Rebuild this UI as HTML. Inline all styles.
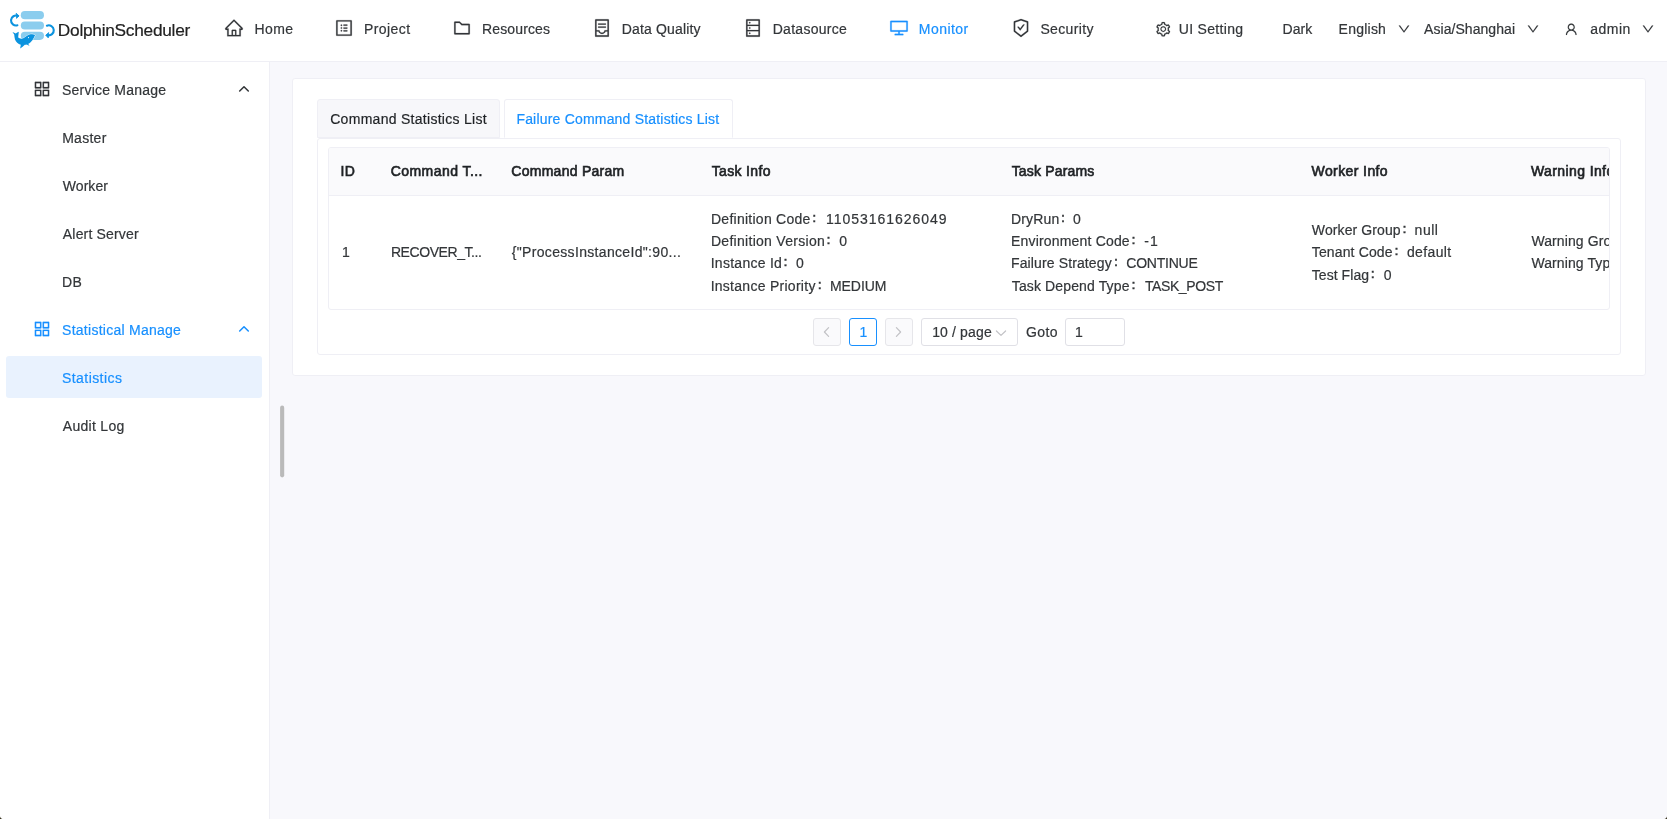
<!DOCTYPE html>
<html lang="en">
<head>
<meta charset="utf-8">
<title>DolphinScheduler</title>
<style>
*{box-sizing:border-box;margin:0;padding:0}
html,body{width:1667px;height:819px;overflow:hidden}
body{font-family:"Liberation Sans","Noto Sans CJK SC",sans-serif;font-size:14px;color:#333639;background:#f8f8fc;position:relative;line-height:22px}
#app{position:absolute;left:0;top:0;width:1667px;height:819px;overflow:hidden;will-change:transform}
.t{position:absolute;white-space:nowrap;line-height:22px;-webkit-text-stroke:0.2px}
.ic{position:absolute;display:block}
.box{position:absolute}
#header{left:0;top:0;width:1667px;height:62px;background:#fff;border-bottom:1px solid #efeff5}
#side{left:0;top:62px;width:270px;height:757px;background:#fff;border-right:1px solid #efeff5}
#sel{left:6px;top:356px;width:256px;height:42px;background:#e9f2fe;border-radius:3px}
#card{left:292px;top:78px;width:1354px;height:298px;background:#fff;border:1px solid #efeff5;border-radius:3px}
.tab{top:99px;height:39px;border:1px solid #efeff5;border-radius:3px 3px 0 0}
#tab1{left:317px;width:183px;background:#f7f7fa}
#tab2{left:504px;width:229px;background:#fff;border-bottom-color:#fff}
#pane{left:317px;top:137.5px;width:1304px;height:217px;border:1px solid #efeff5;border-radius:3px;background:#fff}
#tbl{left:328px;top:147px;width:1282px;height:163px;border:1px solid #efeff5;border-radius:3px;background:#fff;overflow:hidden}
#thead{left:0;top:0;width:1300px;height:48px;background:#fafafc;border-bottom:1px solid #efeff5}
#clip{left:0;top:0;width:1609px;height:400px;overflow:hidden}
.pg{top:318px;height:28px;border:1px solid #e0e0e6;border-radius:3px;background:#fff}
.pg.dis{background:#fafafc;border-color:#e6e6ea}
.co{position:absolute;line-height:22px;white-space:nowrap;font-family:"WenQuanYi Zen Hei","Noto Sans CJK SC",sans-serif;-webkit-text-stroke:0.35px}
ul{list-style:none}
</style>
</head>
<body>
<div id="app">
<header>
<div class="box" id="header"></div>
<div class="logo-wrap">
<svg class="ic" id="logo" style="left:0;top:0" width="60" height="56" viewBox="0 0 60 56">
<rect x="20.8" y="11.1" width="23.2" height="8.1" rx="4.05" fill="#8bcdee"/>
<rect x="20.8" y="21.4" width="23.2" height="8" rx="4" fill="#8bcdee"/>
<rect x="20.8" y="31.7" width="23.2" height="8.2" rx="4.1" fill="#8bcdee"/>
<path d="M18 15.9 A5 5 0 1 0 17.4 25.3" fill="none" stroke="#0b93df" stroke-width="2.1" stroke-linecap="round"/>
<path d="M16.2 13.2 L18.9 15.8 L16.6 18.4 Z" fill="#0b93df" stroke="#0b93df" stroke-width="0.8" stroke-linejoin="round"/>
<path d="M46.9 25.7 A5 5 0 1 1 47.6 35.2" fill="none" stroke="#0b93df" stroke-width="2.1" stroke-linecap="round"/>
<path d="M48.7 32.6 L45.7 35.2 L48.3 37.9 Z" fill="#0b93df" stroke="#0b93df" stroke-width="0.8" stroke-linejoin="round"/>
<path d="M12.5 31.9 C13.6 32.4 14.8 33 15.7 33.5 C16.6 32.9 17.7 32.3 18.8 31.8 C18.7 33.6 18.3 35.6 18.2 37.2 C19.6 38.9 21.6 38.9 23.4 38.2 C25.4 37.3 27.2 35.4 29.6 34.5 C31.5 33.9 33.6 34.2 35.2 35 C34.6 35.9 34.2 36.8 33.8 37.7 C33 39.4 31.9 41 30.6 42.2 C29.8 42.9 29 43.5 28.1 44 C28.7 44.4 29.2 45 29.5 45.7 C28.5 45.5 27.6 45.1 26.8 44.6 C26 44.9 25.4 44.8 24.8 44.7 C23.4 46 22 47.4 20.2 48.4 C20.4 47.2 20.6 45.9 20.8 44.7 C19.4 44.3 18.2 43.6 17.2 42.7 C16.2 41.8 15.5 40.7 15 39.5 C14.5 37.9 14.4 36.2 14.2 34.5 C13.6 33.6 13 32.8 12.5 31.9 Z" fill="#0b93df" stroke="#fff" stroke-width="0.9" paint-order="stroke" stroke-linejoin="round"/>
<circle cx="28.5" cy="37.6" r="0.55" fill="#fff"/>
</svg>
<span class="t" id="brand" style="left:57.83px;top:19.20px;letter-spacing:-0.266px;font-size:17.3px;color:#222">DolphinScheduler</span>
</div>
<nav class="main-menu">
<div class="menu-item"><svg class="ic" style="left:224.4px;top:18.4px" width="20" height="20" viewBox="0 0 1024 1024" fill="#333639" stroke="#333639" stroke-width="9"><path d="M946.5 505L560.1 118.8l-25.900-25.900a31.500 31.500 0 0 0-44.400 0L77.500 505a63.900 63.900 0 0 0-18.800 46c.400 35.200 29.700 63.300 64.900 63.300h42.500V940h691.800V614.300h43.400c17.100 0 33.200-6.700 45.300-18.800a63.600 63.600 0 0 0 18.700-45.300c0-17-6.700-33.100-18.800-45.200zM568 868H456V664h112v204zm217.900-325.700V868H632V640c0-22.100-17.900-40-40-40H432c-22.100 0-40 17.900-40 40v228H238.100V542.300h-96l370-369.700 23.100 23.100L882 542.300h-96.100z"/></svg><span class="t" id="n1" style="left:254.47px;top:18.00px;letter-spacing:0.417px">Home</span></div>
<div class="menu-item"><svg class="ic" style="left:333.8px;top:18.3px" width="20" height="20" viewBox="0 0 1024 1024" fill="#333639" stroke="#333639" stroke-width="9"><path d="M880 112H144c-17.700 0-32 14.300-32 32v736c0 17.700 14.300 32 32 32h736c17.700 0 32-14.300 32-32V144c0-17.700-14.300-32-32-32zm-40 728H184V184h656v656zM492 400h184c4.400 0 8-3.600 8-8v-48c0-4.400-3.600-8-8-8H492c-4.400 0-8 3.600-8 8v48c0 4.400 3.600 8 8 8zm0 144h184c4.400 0 8-3.600 8-8v-48c0-4.400-3.600-8-8-8H492c-4.400 0-8 3.600-8 8v48c0 4.400 3.600 8 8 8zm0 144h184c4.400 0 8-3.600 8-8v-48c0-4.400-3.600-8-8-8H492c-4.400 0-8 3.600-8 8v48c0 4.400 3.600 8 8 8zM340 368a40 40 0 1 0 80 0 40 40 0 1 0-80 0zm0 144a40 40 0 1 0 80 0 40 40 0 1 0-80 0zm0 144a40 40 0 1 0 80 0 40 40 0 1 0-80 0z"/></svg><span class="t" id="n2" style="left:364.04px;top:18.00px;letter-spacing:0.418px">Project</span></div>
<div class="menu-item"><svg class="ic" style="left:451.8px;top:17.8px" width="20" height="20" viewBox="0 0 1024 1024" fill="#333639" stroke="#333639" stroke-width="9"><path d="M880 298.400H521L403.700 186.200a8.150 8.150 0 0 0-5.500-2.200H144c-17.700 0-32 14.300-32 32v592c0 17.700 14.300 32 32 32h736c17.700 0 32-14.300 32-32V330.400c0-17.700-14.300-32-32-32zM840 768H184V256h188.500l119.600 114.400H840V768z"/></svg><span class="t" id="n3" style="left:482.04px;top:18.00px;letter-spacing:0.128px">Resources</span></div>
<div class="menu-item"><svg class="ic" style="left:591.5px;top:18.3px" width="20" height="20" viewBox="0 0 1024 1024" fill="#333639" stroke="#333639" stroke-width="9"><path d="M832 64H192c-17.700 0-32 14.300-32 32v832c0 17.700 14.300 32 32 32h640c17.700 0 32-14.300 32-32V96c0-17.700-14.300-32-32-32zm-40 824H232V687h97.900c11.600 32.800 32 62.300 59.100 84.700 34.500 28.500 78.200 44.300 123 44.300s88.500-15.700 123-44.300c27.100-22.400 47.500-51.900 59.100-84.700H792v201zm0-264H643.600l-5.200 24.700C626.400 708.500 573.200 752 512 752s-114.400-43.500-126.500-103.300l-5.200-24.700H232V136h560v488zM320 341h384c4.400 0 8-3.600 8-8v-48c0-4.400-3.600-8-8-8H320c-4.400 0-8 3.600-8 8v48c0 4.400 3.600 8 8 8zm0 160h384c4.400 0 8-3.600 8-8v-48c0-4.400-3.600-8-8-8H320c-4.400 0-8 3.600-8 8v48c0 4.400 3.600 8 8 8z"/></svg><span class="t" id="n4" style="left:621.68px;top:18.00px;letter-spacing:0.170px">Data Quality</span></div>
<div class="menu-item"><svg class="ic" style="left:742.9px;top:18.3px" width="20" height="20" viewBox="0 0 1024 1024" fill="#333639" stroke="#333639" stroke-width="9"><path d="M832 64H192c-17.700 0-32 14.300-32 32v832c0 17.700 14.300 32 32 32h640c17.700 0 32-14.300 32-32V96c0-17.700-14.300-32-32-32zm-600 72h560v208H232V136zm560 480H232V408h560v208zm0 272H232V680h560v208zM304 240a40 40 0 1 0 80 0 40 40 0 1 0-80 0zm0 272a40 40 0 1 0 80 0 40 40 0 1 0-80 0zm0 272a40 40 0 1 0 80 0 40 40 0 1 0-80 0z"/></svg><span class="t" id="n5" style="left:772.68px;top:18.00px;letter-spacing:0.290px">Datasource</span></div>
<div class="menu-item active"><svg class="ic" style="left:888.6px;top:18.4px" width="20" height="20" viewBox="0 0 1024 1024" fill="#1890ff" stroke="#1890ff" stroke-width="9"><path d="M928 140H96c-17.700 0-32 14.300-32 32v496c0 17.700 14.300 32 32 32h380v112H304c-8.800 0-16 7.200-16 16v48c0 4.400 3.600 8 8 8h432c4.400 0 8-3.600 8-8v-48c0-8.800-7.200-16-16-16H548V700h380c17.700 0 32-14.300 32-32V172c0-17.700-14.300-32-32-32zm-40 488H136V212h752v416z"/></svg><span class="t" id="n6" style="left:918.83px;top:18.00px;letter-spacing:0.441px;color:#1890ff">Monitor</span></div>
<div class="menu-item"><svg class="ic" style="left:1010.8px;top:18px" width="20" height="20" viewBox="0 0 1024 1024" fill="#333639" stroke="#333639" stroke-width="9"><path d="M866.900 169.900L527.100 54.100C523 52.700 517.500 52 512 52s-11 .7-15.100 2.100L157.100 169.900c-8.300 2.800-15.100 12.400-15.100 21.200v482.400c0 8.800 5.700 20.400 12.600 25.900L499.300 968c3.500 2.700 8 4.100 12.600 4.100s9.200-1.400 12.600-4.100l344.700-268.600c6.900-5.400 12.600-17 12.600-25.900V191.100c.2-8.800-6.600-18.300-14.900-21.200zM810 654.300L512 886.500 214 654.300V226.700l298-101.600 298 101.600v427.600zm-405.800-201c-3-4.100-7.800-6.600-13-6.600H336c-6.500 0-10.300 7.400-6.500 12.700l126.400 174a16.100 16.100 0 0 0 26 0l212.600-292.700c3.800-5.300 0-12.700-6.500-12.700h-55.200c-5.100 0-10 2.500-13 6.600L468.900 542.400l-64.700-89.100z"/></svg><span class="t" id="n7" style="left:1040.41px;top:18.00px;letter-spacing:0.353px">Security</span></div>
</nav>
<div class="toolbar">
<div class="tool"><svg class="ic" style="left:1155.35px;top:21.15px" width="16.5" height="16.5" viewBox="0 0 1024 1024" fill="#333639" stroke="#333639" stroke-width="9"><path d="M924.800 625.700l-65.500-56c3.100-19 4.700-38.400 4.700-57.800s-1.600-38.800-4.700-57.800l65.500-56a32.030 32.030 0 0 0 9.300-35.200l-.9-2.600a442.090 442.090 0 0 0-79.700-137.900l-1.800-2.100a32.120 32.120 0 0 0-35.100-9.500l-81.300 28.900c-30-24.600-63.500-44-99.700-57.600l-15.700-85a32.050 32.050 0 0 0-25.800-25.700l-2.700-.5c-52.100-9.400-106.900-9.400-159 0l-2.700.5a32.050 32.050 0 0 0-25.800 25.700l-15.800 85.400a351.860 351.860 0 0 0-99 57.400l-81.900-29.100a32 32 0 0 0-35.100 9.500l-1.800 2.100a446.020 446.020 0 0 0-79.700 137.900l-.9 2.600c-4.500 12.500-.8 26.500 9.300 35.200l66.300 56.600c-3.100 18.800-4.600 38-4.600 57.100 0 19.200 1.500 38.400 4.600 57.100L99 625.500a32.030 32.030 0 0 0-9.300 35.200l.9 2.600c18.100 50.400 44.900 96.900 79.700 137.900l1.800 2.100a32.120 32.120 0 0 0 35.100 9.500l81.900-29.100c29.800 24.500 63.100 43.900 99 57.400l15.800 85.400a32.050 32.050 0 0 0 25.800 25.700l2.700.5a449.400 449.400 0 0 0 159 0l2.700-.5a32.050 32.050 0 0 0 25.800-25.700l15.700-85a350 350 0 0 0 99.700-57.600l81.300 28.900a32 32 0 0 0 35.100-9.500l1.800-2.100c34.800-41.100 61.600-87.500 79.700-137.900l.9-2.600c4.500-12.300.8-26.300-9.300-35zM788.300 465.900c2.500 15.100 3.800 30.600 3.800 46.100s-1.300 31-3.800 46.100l-6.600 40.100 74.700 63.900a370.030 370.030 0 0 1-42.600 73.600L721 702.800l-31.400 25.800c-23.900 19.600-50.500 35-79.300 45.800l-38.100 14.300-17.900 97a377.500 377.500 0 0 1-85 0l-17.900-97.200-37.800-14.500c-28.500-10.800-55-26.200-78.700-45.700l-31.400-25.900-93.400 33.200c-17-22.900-31.200-47.600-42.600-73.600l75.500-64.500-6.500-40c-2.400-14.900-3.700-30.300-3.700-45.500 0-15.300 1.200-30.600 3.700-45.500l6.500-40-75.500-64.500c11.300-26.100 25.600-50.700 42.600-73.600l93.400 33.200 31.400-25.900c23.700-19.500 50.200-34.900 78.700-45.700l37.900-14.300 17.900-97.200c28.100-3.200 56.800-3.200 85 0l17.900 97 38.100 14.300c28.700 10.800 55.400 26.200 79.300 45.800l31.400 25.800 92.800-32.900c17 22.900 31.200 47.600 42.600 73.600L781.800 426l6.500 39.900zM512 326c-97.200 0-176 78.800-176 176s78.800 176 176 176 176-78.800 176-176-78.800-176-176-176zm79.200 255.200A111.600 111.600 0 0 1 512 614c-29.900 0-58-11.700-79.200-32.800A111.600 111.600 0 0 1 400 502c0-29.900 11.700-58 32.800-79.200C454 401.600 482.100 390 512 390c29.900 0 58 11.600 79.200 32.800A111.600 111.600 0 0 1 624 502c0 29.900-11.700 58-32.800 79.200z"/></svg><span class="t" id="n8" style="left:1178.81px;top:18.00px;letter-spacing:0.310px">UI Setting</span></div>
<div class="tool"><span class="t" id="n9" style="left:1282.47px;top:18.00px;letter-spacing:0.050px">Dark</span></div>
<div class="tool"><span class="t" id="n10" style="left:1338.59px;top:18.00px;letter-spacing:0.235px">English</span><svg class="ic" style="left:1396.9px;top:22.3px" width="14" height="14" viewBox="0 0 1024 1024" fill="#333639" stroke="#333639" stroke-width="9"><path d="M884 256h-75c-5.100 0-9.900 2.500-12.900 6.600L512 654.200 227.900 262.600c-3-4.100-7.800-6.600-12.900-6.600h-75c-6.500 0-10.300 7.400-6.500 12.700l352.600 486.100c12.800 17.600 39 17.600 51.700 0l352.600-486.100c3.900-5.300.1-12.700-6.400-12.700z"/></svg></div>
<div class="tool"><span class="t" id="n11" style="left:1424.00px;top:18.00px;letter-spacing:0.061px">Asia/Shanghai</span><svg class="ic" style="left:1525.8px;top:22.3px" width="14" height="14" viewBox="0 0 1024 1024" fill="#333639" stroke="#333639" stroke-width="9"><path d="M884 256h-75c-5.100 0-9.900 2.500-12.900 6.600L512 654.200 227.900 262.600c-3-4.100-7.800-6.600-12.900-6.600h-75c-6.500 0-10.300 7.400-6.500 12.700l352.600 486.100c12.800 17.600 39 17.600 51.700 0l352.600-486.100c3.900-5.300.1-12.700-6.400-12.700z"/></svg></div>
<div class="tool"><svg class="ic" style="left:1563.9px;top:21.9px" width="14.5" height="14.5" viewBox="0 0 1024 1024" fill="#333639" stroke="#333639" stroke-width="9"><path d="M858.500 763.600a374 374 0 0 0-80.600-119.500 375.630 375.630 0 0 0-119.500-80.600c-.4-.2-.8-.3-1.200-.5C719.500 518 760 444.700 760 362c0-137-111-248-248-248S264 225 264 362c0 82.700 40.500 156 102.800 201.100-.4.200-.8.300-1.200.5-44.800 18.900-85 46-119.500 80.600a375.630 375.630 0 0 0-80.600 119.500A371.700 371.700 0 0 0 136 901.800a8 8 0 0 0 8 8.200h60c4.400 0 7.900-3.500 8-7.800 2-77.200 33-149.500 87.800-204.300 56.700-56.700 132-87.900 212.200-87.900s155.500 31.200 212.200 87.900C779 752.700 810 825 812 902.200c.1 4.400 3.600 7.800 8 7.800h60a8 8 0 0 0 8-8.200c-1-47.800-10.900-94.300-29.500-138.200zM512 534c-45.900 0-89.100-17.900-121.600-50.400S340 407.900 340 362c0-45.900 17.900-89.100 50.400-121.600S466.100 190 512 190s89.100 17.900 121.600 50.400S684 316.100 684 362c0 45.900-17.900 89.100-50.400 121.600S557.900 534 512 534z"/></svg><span class="t" id="n12" style="left:1590.22px;top:18.00px;letter-spacing:0.487px">admin</span><svg class="ic" style="left:1641.3px;top:22.3px" width="14" height="14" viewBox="0 0 1024 1024" fill="#333639" stroke="#333639" stroke-width="9"><path d="M884 256h-75c-5.100 0-9.900 2.500-12.900 6.600L512 654.200 227.900 262.600c-3-4.100-7.800-6.600-12.900-6.600h-75c-6.500 0-10.300 7.400-6.500 12.700l352.600 486.100c12.800 17.600 39 17.600 51.700 0l352.600-486.100c3.900-5.300.1-12.700-6.400-12.700z"/></svg></div>
</div>
</header>
<aside>
<div class="box" id="side"></div>
<div class="box" id="sel"></div>
<ul class="side-menu">
<li class="submenu"><svg class="ic" style="left:32.3px;top:78.8px" width="20" height="20" viewBox="0 0 1024 1024" fill="#333639" stroke="#333639" stroke-width="9"><path d="M464 144H160c-8.800 0-16 7.200-16 16v304c0 8.800 7.200 16 16 16h304c8.800 0 16-7.200 16-16V160c0-8.800-7.200-16-16-16zm-52 268H212V212h200v200zm452-268H560c-8.800 0-16 7.200-16 16v304c0 8.800 7.200 16 16 16h304c8.800 0 16-7.200 16-16V160c0-8.800-7.200-16-16-16zm-52 268H612V212h200v200zM464 544H160c-8.800 0-16 7.200-16 16v304c0 8.800 7.200 16 16 16h304c8.800 0 16-7.200 16-16V560c0-8.800-7.200-16-16-16zm-52 268H212V612h200v200zm452-268H560c-8.800 0-16 7.200-16 16v304c0 8.800 7.200 16 16 16h304c8.800 0 16-7.200 16-16V560c0-8.800-7.200-16-16-16zm-52 268H612V612h200v200z"/></svg><span class="t" id="s1" style="left:62.07px;top:79.00px;letter-spacing:0.212px">Service Manage</span><svg class="ic" style="left:236.3px;top:80.8px" width="16" height="16" viewBox="0 0 16 16" fill="none" stroke="#333639" stroke-width="1.55" stroke-linecap="round" stroke-linejoin="round"><path d="M3.7 10 L8 5.8 L12.3 10"/></svg>
<ul>
<li><span class="t" id="s2" style="left:62.14px;top:127.00px;letter-spacing:0.283px">Master</span></li>
<li><span class="t" id="s3" style="left:62.84px;top:175.00px;letter-spacing:0.039px">Worker</span></li>
<li><span class="t" id="s4" style="left:62.86px;top:223.00px;letter-spacing:0.168px">Alert Server</span></li>
<li><span class="t" id="s5" style="left:61.91px;top:271.00px;letter-spacing:0.491px">DB</span></li>
</ul>
</li>
<li class="submenu active"><svg class="ic" style="left:32.3px;top:318.8px" width="20" height="20" viewBox="0 0 1024 1024" fill="#1890ff" stroke="#1890ff" stroke-width="9"><path d="M464 144H160c-8.800 0-16 7.200-16 16v304c0 8.800 7.200 16 16 16h304c8.800 0 16-7.200 16-16V160c0-8.800-7.200-16-16-16zm-52 268H212V212h200v200zm452-268H560c-8.800 0-16 7.200-16 16v304c0 8.800 7.200 16 16 16h304c8.800 0 16-7.200 16-16V160c0-8.800-7.200-16-16-16zm-52 268H612V212h200v200zM464 544H160c-8.800 0-16 7.200-16 16v304c0 8.800 7.200 16 16 16h304c8.800 0 16-7.200 16-16V560c0-8.800-7.200-16-16-16zm-52 268H212V612h200v200zm452-268H560c-8.800 0-16 7.200-16 16v304c0 8.800 7.200 16 16 16h304c8.800 0 16-7.200 16-16V560c0-8.800-7.200-16-16-16zm-52 268H612V612h200v200z"/></svg><span class="t" id="s6" style="left:62.08px;top:319.00px;letter-spacing:0.260px;color:#1890ff">Statistical Manage</span><svg class="ic" style="left:236.3px;top:320.8px" width="16" height="16" viewBox="0 0 16 16" fill="none" stroke="#1890ff" stroke-width="1.55" stroke-linecap="round" stroke-linejoin="round"><path d="M3.7 10 L8 5.8 L12.3 10"/></svg>
<ul>
<li class="active"><span class="t" id="s7" style="left:62.05px;top:367.00px;letter-spacing:0.424px;color:#1890ff">Statistics</span></li>
<li><span class="t" id="s8" style="left:62.86px;top:415.00px;letter-spacing:0.276px">Audit Log</span></li>
</ul>
</li>
</ul>
<svg class="ic" style="left:276px;top:400px" width="12" height="84" viewBox="0 0 12 84"><rect x="4.1" y="5.6" width="4.1" height="71.8" rx="2.05" fill="#bababa"/></svg>
</aside>
<main>
<div class="box" id="card"></div>
<div class="box" id="pane"></div>
<div class="tabs">
<div class="box tab" id="tab1"></div>
<div class="box tab" id="tab2"></div>
<span class="t" id="t1" style="left:330.23px;top:108.00px;letter-spacing:0.283px;color:#1f2225">Command Statistics List</span>
<span class="t" id="t2" style="left:516.40px;top:108.00px;letter-spacing:0.195px;color:#1890ff">Failure Command Statistics List</span>
</div>
<div class="box" id="tbl"><div class="box" id="thead"></div></div>
<div class="box" id="clip">
<div class="tr head">
<span class="t" id="h1" style="left:340.52px;top:160.00px;letter-spacing:0.231px;-webkit-text-stroke:0.65px;color:#1f2225">ID</span>
<span class="t" id="h2" style="left:390.71px;top:160.00px;letter-spacing:0.447px;-webkit-text-stroke:0.65px;color:#1f2225">Command T...</span>
<span class="t" id="h3" style="left:511.29px;top:160.00px;letter-spacing:0.268px;-webkit-text-stroke:0.65px;color:#1f2225">Command Param</span>
<span class="t" id="h4" style="left:711.69px;top:160.00px;letter-spacing:0.341px;-webkit-text-stroke:0.65px;color:#1f2225">Task Info</span>
<span class="t" id="h5" style="left:1011.69px;top:160.00px;letter-spacing:0.172px;-webkit-text-stroke:0.65px;color:#1f2225">Task Params</span>
<span class="t" id="h6" style="left:1311.52px;top:160.00px;letter-spacing:0.403px;-webkit-text-stroke:0.65px;color:#1f2225">Worker Info</span>
<span class="t" id="h7" style="left:1530.91px;top:160.00px;letter-spacing:0.403px;-webkit-text-stroke:0.65px;color:#1f2225">Warning Info</span>
</div>
<div class="tr">
<div class="td"><span class="t" id="r1" style="left:342.06px;top:241.00px">1</span></div>
<div class="td"><span class="t" id="r2" style="left:390.91px;top:241.00px;letter-spacing:-0.429px">RECOVER_T...</span></div>
<div class="td"><span class="t" id="r3" style="left:511.75px;top:241.00px;letter-spacing:0.328px">{&quot;ProcessInstanceId&quot;:90...</span></div>
<div class="td">
<div><span class="t" id="a1" style="left:710.96px;top:208.00px;letter-spacing:0.265px">Definition Code</span><span class="co" style="left:807.30px;top:207.00px">：</span><span class="t" id="a1v" style="left:826.05px;top:208.00px;letter-spacing:0.954px">11053161626049</span></div>
<div><span class="t" id="a2" style="left:710.96px;top:230.00px;letter-spacing:0.285px">Definition Version</span><span class="co" style="left:821.50px;top:229.00px">：</span><span class="t" id="a2v" style="left:839.37px;top:230.00px">0</span></div>
<div><span class="t" id="a3" style="left:710.73px;top:252.00px;letter-spacing:0.263px">Instance Id</span><span class="co" style="left:778.50px;top:251.00px">：</span><span class="t" id="a3v" style="left:795.94px;top:252.00px">0</span></div>
<div><span class="t" id="a4" style="left:710.63px;top:275.00px;letter-spacing:0.274px">Instance Priority</span><span class="co" style="left:812.80px;top:274.00px">：</span><span class="t" id="a4v" style="left:829.96px;top:275.00px;letter-spacing:-0.058px">MEDIUM</span></div>
</div>
<div class="td">
<div><span class="t" id="b1" style="left:1010.90px;top:208.00px;letter-spacing:0.201px">DryRun</span><span class="co" style="left:1056.10px;top:207.00px">：</span><span class="t" id="b1v" style="left:1072.97px;top:208.00px">0</span></div>
<div><span class="t" id="b2" style="left:1011.00px;top:230.00px;letter-spacing:0.179px">Environment Code</span><span class="co" style="left:1126.50px;top:229.00px">：</span><span class="t" id="b2v" style="left:1144.21px;top:230.00px;letter-spacing:1.138px">-1</span></div>
<div><span class="t" id="b3" style="left:1011.00px;top:252.00px;letter-spacing:0.125px">Failure Strategy</span><span class="co" style="left:1109.10px;top:251.00px">：</span><span class="t" id="b3v" style="left:1126.27px;top:252.00px;letter-spacing:-0.237px">CONTINUE</span></div>
<div><span class="t" id="b4" style="left:1011.76px;top:275.00px;letter-spacing:0.131px">Task Depend Type</span><span class="co" style="left:1126.50px;top:274.00px">：</span><span class="t" id="b4v" style="left:1144.93px;top:275.00px;letter-spacing:-0.396px">TASK_POST</span></div>
</div>
<div class="td">
<div><span class="t" id="c1" style="left:1311.85px;top:219.00px;letter-spacing:0.098px">Worker Group</span><span class="co" style="left:1397.50px;top:218.00px">：</span><span class="t" id="c1v" style="left:1414.61px;top:219.00px;letter-spacing:0.512px">null</span></div>
<div><span class="t" id="c2" style="left:1311.75px;top:241.00px;letter-spacing:0.144px">Tenant Code</span><span class="co" style="left:1389.50px;top:240.00px">：</span><span class="t" id="c2v" style="left:1406.96px;top:241.00px;letter-spacing:0.357px">default</span></div>
<div><span class="t" id="c3" style="left:1311.73px;top:264.00px;letter-spacing:0.064px">Test Flag</span><span class="co" style="left:1365.80px;top:263.00px">：</span><span class="t" id="c3v" style="left:1383.74px;top:264.00px">0</span></div>
</div>
<div class="td">
<div><span class="t" id="d1" style="left:1531.40px;top:230.00px;letter-spacing:0.098px">Warning Group</span></div>
<div><span class="t" id="d2" style="left:1531.40px;top:252.00px;letter-spacing:0.098px">Warning Type</span></div>
</div>
</div>
</div>
<div class="pagination">
<div class="box pg dis" style="left:813px;width:28px"></div>
<div class="box pg" style="left:849px;width:28px;border-color:#1890ff"></div>
<div class="box pg dis" style="left:885px;width:28px"></div>
<div class="box pg" style="left:921px;width:97px"></div>
<div class="box pg" style="left:1065px;width:60px"></div>
<svg class="ic" style="left:818.7px;top:324.1px" width="16" height="16" viewBox="0 0 16 16" fill="none" stroke="#c2c2c6" stroke-width="1.2" stroke-linecap="round" stroke-linejoin="round"><path d="M9.6 3.6 L5.4 8 L9.6 12.4"/></svg>
<svg class="ic" style="left:890.3px;top:324.1px" width="16" height="16" viewBox="0 0 16 16" fill="none" stroke="#c2c2c6" stroke-width="1.2" stroke-linecap="round" stroke-linejoin="round"><path d="M6.4 3.6 L10.6 8 L6.4 12.4"/></svg>
<svg class="ic" style="left:993px;top:324.5px" width="16" height="16" viewBox="0 0 16 16" fill="none" stroke="#c2c2c6" stroke-width="1.2" stroke-linecap="round" stroke-linejoin="round"><path d="M3.4 6 L8 10.4 L12.6 6"/></svg>
<span class="t" id="p1" style="left:859.50px;top:321.00px;color:#1890ff">1</span>
<span class="t" id="p2" style="left:932.20px;top:321.00px;letter-spacing:0.139px">10 / page</span>
<span class="t" id="p3" style="left:1026.07px;top:321.00px;letter-spacing:0.387px">Goto</span>
<span class="t" id="p4" style="left:1075.06px;top:321.00px">1</span>
</div>
</main>
<svg class="ic" style="left:0;top:815px" width="4" height="4" viewBox="0 0 4 4"><path d="M0 1.6 Q0.3 3.7 2.4 4 L0 4 Z" fill="#2a2410"/></svg>
<svg class="ic" style="left:1663px;top:815px" width="4" height="4" viewBox="0 0 4 4"><path d="M4 1.6 Q3.7 3.7 1.6 4 L4 4 Z" fill="#2a2410"/></svg>
</div>
</body>
</html>
